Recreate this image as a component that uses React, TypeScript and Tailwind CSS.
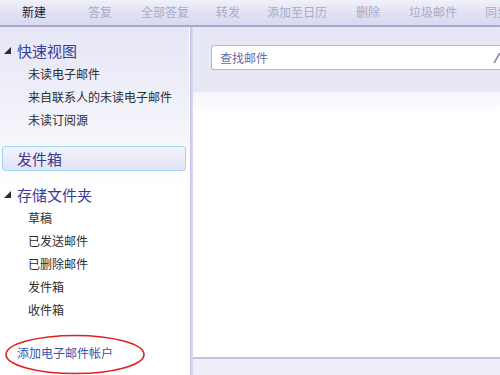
import React from "react";

const toolbarItems = [
  { label: "答复", x: "ml-[31px]" },
  { label: "全部答复", x: "ml-[29px]" },
  { label: "转发", x: "ml-[27px]" },
  { label: "添加至日历", x: "ml-[27px]" },
  { label: "删除", x: "ml-[29px]" },
  { label: "垃圾邮件", x: "ml-[29px]" },
  { label: "同步", x: "ml-[28px]" },
];

const quickViews = ["未读电子邮件", "来自联系人的未读电子邮件", "未读订阅源"];
const folders = ["草稿", "已发送邮件", "已删除邮件", "发件箱", "收件箱"];

const Caret = () => (
  <svg width="7" height="7" viewBox="0 0 7 7" className="shrink-0">
    <polygon points="7,0 7,7 0,7" fill="#2a2a3a" />
  </svg>
);

const SectionHeader = ({ title }: { title: string }) => (
  <div className="flex items-center h-[22px] pl-[4px]">
    <Caret />
    <span className="ml-[6px] text-[15px] text-[#3a3a9a] leading-none">{title}</span>
  </div>
);

const Item = ({ label }: { label: string }) => (
  <div className="h-[23px] flex items-center pl-[28px] text-[12px] text-[#2d2d2d] leading-none">
    {label}
  </div>
);

const App = () => {
  return (
    <div
      className="relative w-[500px] h-[375px] overflow-hidden bg-white"
      style={{ fontFamily: '"Noto Sans CJK SC", "Noto Sans", sans-serif' }}
    >
      {/* toolbar */}
      <div className="h-[27px] pb-[2px] flex items-center whitespace-nowrap text-[12px] bg-gradient-to-b from-[#f1f1fa] via-[#e2e2f3] to-[#d9d9ef] border-b-[2px] border-[#a8a8cc]">
        <span className="ml-[22px] text-[#1c1c3c]">新建</span>
        <svg width="6" height="4" viewBox="0 0 6 4" className="ml-[11px]">
          <polygon points="0,0 6,0 3,4" fill="#1c1c3c" />
        </svg>
        {toolbarItems.map((t) => (
          <span key={t.label} className={`${t.x} text-[#a7abc9]`}>
            {t.label}
          </span>
        ))}
      </div>

      <div className="flex h-[348px]">
        {/* sidebar */}
        <div className="w-[190px] shrink-0 bg-gradient-to-b from-[#e6e6f6] via-[#f4f4fb] via-30% to-white to-45% pt-[12px] border-r border-[#fafaff]">
          <SectionHeader title="快速视图" />
          <div className="mt-[1px]">
            {quickViews.map((q) => (
              <Item key={q} label={q} />
            ))}
          </div>

          <div className="mt-[15px] mx-[2px] w-[184px] h-[25px] flex items-center pl-[14px] rounded-[3px] border border-[#9fd5f5] bg-gradient-to-b from-[#f3f3fb] to-[#e1e3f6] text-[15px] text-[#3a3a8c] leading-none">
            发件箱
          </div>

          <div className="mt-[12px]">
            <SectionHeader title="存储文件夹" />
          </div>
          <div className="mt-[1px]">
            {folders.map((f) => (
              <Item key={f} label={f} />
            ))}
          </div>

          <div className="mt-[26px] pl-[17px] text-[12px] text-[#3553ad] leading-none">
            添加电子邮件帐户
          </div>
        </div>

        <div className="w-[3px] shrink-0 bg-gradient-to-r from-[#c2c2ea] to-[#dcdcf4]" />

        {/* right pane */}
        <div className="flex-1 flex flex-col bg-[#e7e7f6]">
          <div className="h-[65px] pt-[18px] pl-[18px]">
            <div className="h-[25px] flex items-center pl-[8px] bg-white border border-[#b6b6d8] rounded-l-[3px] border-r-0">
              <span className="text-[12px] text-[#6a6aa8] leading-none">查找邮件</span>
              <div className="ml-auto mr-[-2px] w-[6px] h-[10px] border-l-2 border-[#8a8ab8] skew-x-[-30deg]" />
            </div>
          </div>
          <div className="h-[267px] bg-gradient-to-b from-[#f4f4fc] via-white via-8% to-white border-b-[2px] border-[#c3c3df]" />
          <div className="flex-1 bg-[#eeeef9]" />
        </div>
      </div>

      {/* annotation ellipse */}
      <svg className="absolute left-[4px] top-[334px]" width="142" height="41" viewBox="0 0 142 41">
        <ellipse cx="71" cy="20.5" rx="69" ry="19" fill="none" stroke="#e02020" strokeWidth="1.6" />
      </svg>
    </div>
  );
};

export default App;
